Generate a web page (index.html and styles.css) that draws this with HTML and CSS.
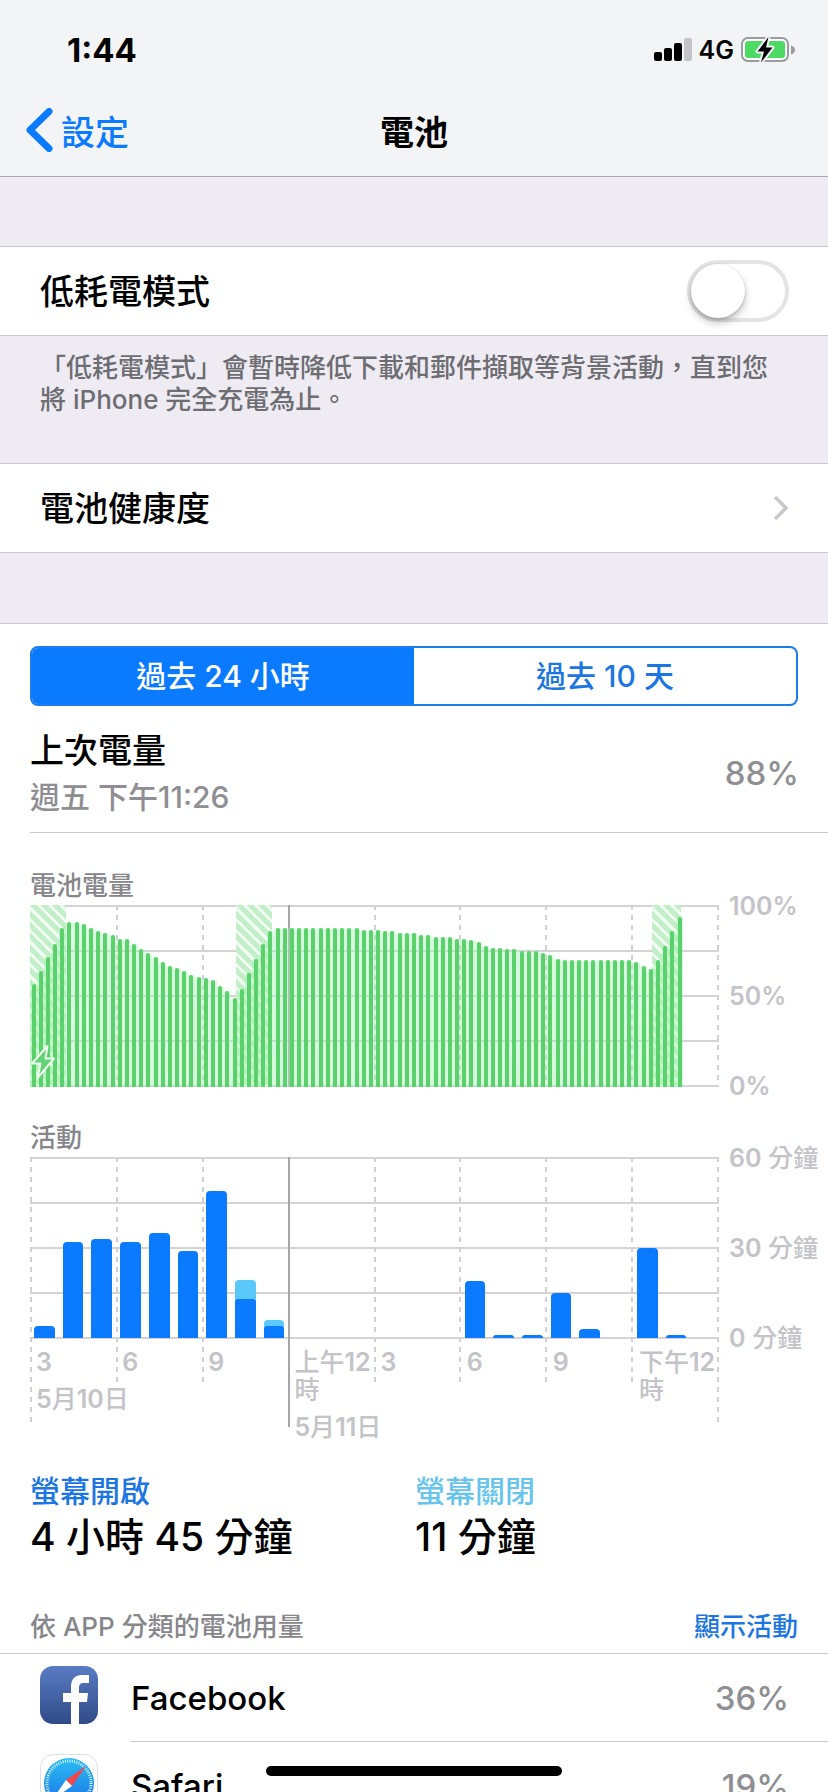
FILE: index.html
```html
<!DOCTYPE html>
<html lang="zh-Hant">
<head>
<meta charset="utf-8">
<meta name="viewport" content="width=device-width, initial-scale=1">
<title>電池</title>
<link rel="stylesheet" href="styles.css">
</head>
<body>
<div class="screen">
  <header class="topbar">
    <div class="status">
      <span class="status-time">1:44</span>
      <div class="status-icons">
        <svg class="signal" viewBox="0 0 38 24" aria-hidden="true">
          <rect x="0" y="14" width="8" height="9" rx="2"/>
          <rect x="10" y="10" width="8" height="13" rx="2"/>
          <rect x="20" y="5" width="8" height="18" rx="2"/>
          <rect x="30" y="0" width="8" height="23" rx="2" fill="#c4c5c8"/>
        </svg>
        <span class="network">4G</span>
        <svg class="battery" viewBox="0 0 54 28" aria-hidden="true">
          <rect x="1" y="2" width="46" height="23" rx="6" fill="#fdfefd" stroke="#9b9ca0" stroke-width="2"/>
          <rect x="4" y="5" width="40" height="17" rx="3" fill="#4cd964"/>
          <path d="M50 9.500q4 1.500 4 4.500t-4 4.500z" fill="#9b9ca0"/>
          <path d="M27.500 1 16.500 15.500h6.500L20 26.500 31.500 11.500h-6.500z" fill="#000" stroke="#f3f4f6" stroke-width="4" stroke-linejoin="round" paint-order="stroke"/>
        </svg>
      </div>
    </div>
    <nav class="nav">
      <a class="back" href="#settings">
        <svg class="back-arrow" viewBox="0 0 28 44" aria-hidden="true"><path d="M24 3.500 5 22l19 18.500" fill="none" stroke="#0a7aff" stroke-width="7" stroke-linecap="round" stroke-linejoin="round"/></svg>
        <span>設定</span>
      </a>
      <h1 class="title">電池</h1>
    </nav>
  </header>

  <main class="content">
    <section class="group">
      <label class="row" for="low-power">
        <span class="row-name">低耗電模式</span>
        <input class="switch" type="checkbox" role="switch" id="low-power">
      </label>
    </section>
    <p class="note">「低耗電模式」會暫時降低下載和郵件擷取等背景活動，直到您將 iPhone 完全充電為止。</p>
    <section class="group">
      <a class="row" href="#health">
        <span class="row-name">電池健康度</span>
        <svg class="disclosure" viewBox="0 0 16 26" aria-hidden="true"><path d="M2 2l11 11L2 24" fill="none" stroke="#c7c7cc" stroke-width="3.500"/></svg>
      </a>
    </section>

    <section class="usage">
      <div class="segmented" role="group" aria-label="時間範圍">
        <button class="segment segment-on" type="button" aria-pressed="true">過去 24 小時</button>
        <button class="segment" type="button" aria-pressed="false">過去 10 天</button>
      </div>

      <div class="last-charge">
        <div>
          <div class="charge-name">上次電量</div>
          <div class="charge-time">週五 下午11:26</div>
        </div>
        <span class="charge-value">88%</span>
      </div>

      <h2 class="chart-title chart-title-first">電池電量</h2>
      <div class="chart">
        <div class="gridlines"><i></i><i></i><i></i><i></i><i></i></div>
        <div class="verticals"><i></i><i></i><i></i><i class="midnight"></i><i></i><i></i><i></i><i></i><i></i></div>
        <div class="zones">
          <div class="zone zone-a"></div>
          <div class="zone zone-b"></div>
          <div class="zone zone-c"></div>
        </div>
        <div class="levels" id="levels"></div>
        <svg class="bolt" viewBox="0 0 26 36" aria-hidden="true"><path d="M17.500 2 2 19.500h8.500L7.500 34 24 14.500h-8.500z" fill="#62d274" stroke="#effcf0" stroke-width="2" stroke-linejoin="round"/></svg>
        <div class="scale"><b>100%</b><b>50%</b><b>0%</b></div>
      </div>

      <h2 class="chart-title">活動</h2>
      <div class="chart">
        <div class="gridlines"><i></i><i></i><i></i><i></i><i></i></div>
        <div class="verticals verticals-long"><i class="long"></i><i></i><i></i><i class="midnight long"></i><i></i><i></i><i></i><i></i><i class="long"></i></div>
        <div class="activity" id="activity"></div>
        <div class="scale"><span><b>60</b> 分鐘</span><span><b>30</b> 分鐘</span><span><b>0</b> 分鐘</span></div>
        <div class="hours">
          <div><b>3</b><div class="date"><b>5</b>月<b>10</b>日</div></div>
          <div><b>6</b></div>
          <div><b>9</b></div>
          <div>上午<b>12</b>時<div class="date"><b>5</b>月<b>11</b>日</div></div>
          <div><b>3</b></div>
          <div><b>6</b></div>
          <div><b>9</b></div>
          <div>下午<b>12</b>時</div>
        </div>
      </div>

      <div class="totals">
        <div>
          <div class="total-name on">螢幕開啟</div>
          <div class="total-value">4 小時 45 分鐘</div>
        </div>
        <div>
          <div class="total-name off">螢幕關閉</div>
          <div class="total-value">11 分鐘</div>
        </div>
      </div>

      <div class="list-head">
        <h2 class="list-title">依 APP 分類的電池用量</h2>
        <button class="list-action" type="button">顯示活動</button>
      </div>
      <div class="apps">
        <a class="app" href="#facebook">
          <svg class="app-icon" viewBox="0 0 58 58" aria-hidden="true">
            <defs><linearGradient id="fb" x1="0" y1="0" x2="0" y2="1"><stop offset="0" stop-color="#5a7cc4"/><stop offset="1" stop-color="#2f4a87"/></linearGradient></defs>
            <rect width="58" height="58" rx="13" fill="url(#fb)"/>
            <path d="M31 58V36h-8v-9h8v-6c0-8 4-12 11-12h7v8h-5c-4 0-5 2-5 5v5h9l-1 9h-8v22z" fill="#fff"/>
          </svg>
          <span class="app-body"><span>Facebook</span><span class="app-share">36%</span></span>
        </a>
        <a class="app" href="#safari">
          <svg class="app-icon" viewBox="0 0 58 58" aria-hidden="true">
            <defs><linearGradient id="sf" x1="0" y1="0" x2="0" y2="1"><stop offset="0" stop-color="#29bdf3"/><stop offset="1" stop-color="#1c6fe4"/></linearGradient></defs>
            <rect x=".5" y=".5" width="57" height="57" rx="13" fill="#fff" stroke="#dedee2"/>
            <circle cx="29" cy="29" r="25" fill="url(#sf)"/>
            <circle cx="29" cy="29" r="22" fill="none" stroke="#d6f2ff" stroke-width="3" stroke-dasharray="1 1.300"/>
            <path d="M46 12 26 26l6 6z" fill="#f2464b"/>
            <path d="M12 46 26 26l6 6z" fill="#fff"/>
          </svg>
          <span class="app-body"><span>Safari</span><span class="app-share">19%</span></span>
        </a>
      </div>
    </section>
  </main>
  <div class="home-indicator"></div>
</div>
<script src="charts.js"></script>
</body>
</html>
```
FILE: styles.css
```css
* { box-sizing: border-box; }

body {
  margin: 0;
  background: #eeecf2;
  color: #000;
  font-family: Inter, "Noto Sans CJK TC", sans-serif;
  font-size: 34px;
  font-weight: 500;
}

h1, h2, p { margin: 0; font-weight: inherit; }
a { color: inherit; text-decoration: none; }
b { font-weight: 600; }
button { padding: 0; border: 0; background: none; font: inherit; }

.screen {
  height: 100vh;
  overflow: hidden;
}

/* Status and navigation bars */
.topbar {
  background: #f3f4f6;
  border-bottom: 1px solid #a9a8af;
}

.status {
  display: flex;
  align-items: center;
  justify-content: space-between;
  height: 88px;
  padding: 12px 33px 0 67px;
}

.status-time { font-size: 33px; font-weight: 700; }

.status-icons { display: flex; align-items: center; gap: 7px; }
.signal { width: 38px; height: 24px; }
.network { font-size: 25px; font-weight: 600; }
.battery { width: 54px; height: 28px; }

.nav {
  display: grid;
  grid-template-columns: 1fr auto 1fr;
  align-items: center;
  height: 88px;
  padding: 0 25px 4px;
}

.back {
  display: flex;
  align-items: center;
  gap: 8px;
  color: #0a7aff;
}
.back-arrow { width: 28px; height: 44px; }
.title { font-size: 34px; font-weight: 600; }

/* Grouped rows */
.content { padding-top: 69px; }

.group {
  background: #fff;
  border-top: 1px solid #c8c7cc;
  border-bottom: 1px solid #c8c7cc;
}

.row {
  display: flex;
  align-items: center;
  justify-content: space-between;
  height: 88px;
  padding: 0 39px 0 40px;
}
.row-name { padding-bottom: 4px; }

.switch {
  appearance: none;
  width: 102px;
  height: 62px;
  margin: 0;
  padding: 0;
  border: 4px solid #e4e4e6;
  border-radius: 31px;
  background: #fff;
}
.switch::before {
  content: "";
  display: block;
  width: 54px;
  height: 54px;
  border-radius: 50%;
  background: #fff;
  box-shadow: 0 5px 8px rgba(0, 0, 0, .22), 0 1px 3px rgba(0, 0, 0, .2);
}
.switch:checked { background: #4cd964; border-color: #4cd964; }
.switch:checked::before { margin-left: auto; }

.note {
  padding: 16px 40px 47px;
  color: #6d6d72;
  font-size: 26px;
  line-height: 32px;
}

.disclosure { width: 16px; height: 26px; }

/* Usage panel */
.usage {
  margin-top: 70px;
  padding-top: 22px;
  background: #fff;
  border-top: 1px solid #c8c7cc;
}

.segmented {
  display: grid;
  grid-template-columns: 1fr 1fr;
  height: 60px;
  margin: 0 30px;
  border: 2px solid #1c7bee;
  border-radius: 8px;
  overflow: hidden;
}
.segment { padding-bottom: 4px; color: #1c76e2; font-size: 30px; }
.segment-on { background: #0a7aff; color: #fff; }

.last-charge {
  display: flex;
  align-items: center;
  justify-content: space-between;
  margin-left: 30px;
  padding: 21px 29px 13px 0;
  border-bottom: 1px solid #c8c7cc;
}
.charge-name { line-height: 48px; }
.charge-time { color: #8e8e93; font-size: 30px; line-height: 44px; }
.charge-value { color: #8e8e93; font-size: 33px; }

.chart-title {
  margin: 33px 30px 1px;
  color: #86868b;
  font-size: 26px;
  line-height: 36px;
}
.chart-title-first { margin-top: 35px; }

/* Charts: every layer shares the plot cell, the scale sits beside it */
.chart {
  display: grid;
  grid-template-columns: 1fr 109px;
  grid-template-rows: 182px auto;
  padding-left: 30px;
}

.gridlines, .verticals, .zones, .levels, .activity, .bolt {
  grid-area: 1 / 1;
}

.gridlines {
  display: flex;
  flex-direction: column;
  justify-content: space-between;
}
.gridlines i { height: 2px; background: #d4d4d8; }

.verticals {
  display: flex;
  justify-content: space-between;
}
.verticals i {
  width: 2px;
  background: repeating-linear-gradient(#d0d0d5 0 5px, transparent 5px 10px);
}
.verticals .midnight { background: #a6a6aa; }
.verticals-long { grid-row: 1 / 3; }
.verticals-long i { height: 226px; }
.verticals-long .long { height: 270px; }

.zones {
  display: grid;
  grid-template-columns: repeat(288, 1fr);
}
.zone {
  grid-row: 1;
  background: repeating-linear-gradient(45deg, #c3efc8 0 5px, #f0fbf1 5px 8px);
}
.zone-a { grid-column: 1 / 16; }
.zone-b { grid-column: 87 / 102; }
.zone-c { grid-column: 261 / 273; }

.levels {
  display: grid;
  grid-template-columns: repeat(96, 1fr);
  align-items: end;
  padding-top: 1px;
}
.level {
  display: flex;
  justify-content: center;
  background: rgba(160, 245, 175, .42);
  border-radius: 2px 2px 0 0;
}
.level i {
  width: 4px;
  border-radius: 2px 2px 0 0;
  background: #5ad16c;
}

.bolt {
  align-self: end;
  width: 26px;
  height: 36px;
  margin-bottom: 7px;
}

.activity {
  display: grid;
  grid-template-columns: repeat(24, 1fr);
  padding: 1px 0;
}
.hour {
  grid-row: 1;
  display: flex;
  flex-direction: column;
  justify-content: flex-end;
  padding: 0 4px;
}
.bar-off, .bar-on { border-radius: 4px 4px 0 0; }
.bar-off { background: #5ac8fa; }
.bar-on { background: #0a7aff; }
.bar-off + .bar-on { border-radius: 2px 2px 0 0; }

.scale {
  grid-area: 1 / 2;
  display: flex;
  flex-direction: column;
  justify-content: space-between;
  margin: -14px 0;
  padding-left: 10px;
  color: #c3c3c8;
  font-size: 25px;
  line-height: 30px;
  white-space: nowrap;
}

.hours {
  grid-area: 2 / 1;
  display: grid;
  grid-template-columns: repeat(8, 1fr);
  padding-top: 9px;
  color: #c3c3c8;
  font-size: 25px;
  line-height: 28px;
}
.hours > div { padding-left: 6px; min-width: 0; word-break: break-all; }
.date { margin-top: 9px; white-space: nowrap; }

.totals {
  display: grid;
  grid-template-columns: 1fr 1fr;
  margin: 28px 0 48px 30px;
  padding-right: 28px;
}
.total-name { font-size: 30px; line-height: 44px; }
.total-name.on { color: #1c76e2; }
.total-name.off { color: #67c4ec; }
.total-value { font-size: 39px; line-height: 48px; }

/* App list */
.list-head {
  display: flex;
  justify-content: space-between;
  padding: 0 30px 8px;
  border-bottom: 1px solid #c8c7cc;
  font-size: 26px;
  line-height: 36px;
}
.list-title { color: #86868b; font-size: 26px; }
.list-action { color: #1c76e2; }

.app {
  display: flex;
  align-items: center;
  gap: 33px;
  padding-left: 40px;
}
.app-icon { width: 58px; height: 58px; margin-bottom: 6px; }
.app-body {
  display: flex;
  flex: 1;
  align-items: center;
  justify-content: space-between;
  height: 88px;
  padding-right: 39px;
  border-bottom: 1px solid #c8c7cc;
  font-size: 33px;
}
.app-share { color: #8e8e93; }

.home-indicator {
  position: fixed;
  bottom: 16px;
  left: 50%;
  width: 296px;
  height: 10px;
  margin-left: -148px;
  border-radius: 5px;
  background: #000;
}
```
FILE: charts.js
```javascript
// Battery level in percent, one reading every 15 minutes.
const levels = [
  57, 64, 72, 79, 88, 91, 91, 90, 88, 86, 85, 84, 82, 82, 79, 76, 74, 72, 69,
  67, 66, 64, 62, 61, 60, 59, 56, 53, 49, 54, 63, 71, 79, 86,
  88, 88, 88, 88, 88, 88, 88, 88, 88, 88, 88, 88,
  87, 87, 87, 86, 86, 85, 85, 85, 84, 84, 83, 83, 83, 82, 82, 81, 80, 78,
  77, 77, 76, 76, 75, 75, 75, 74, 73, 71,
  70, 70, 70, 70, 70, 70, 70, 70, 70, 70, 69, 67, 65, 70, 78, 86, 94
];

// Minutes of use per hour: [screen on, screen off].
const activity = [
  [4, 0], [32, 0], [33, 0], [32, 0], [35, 0], [29, 0], [49, 0], [13, 6.5],
  [4, 2], [0, 0], [0, 0], [0, 0], [0, 0], [0, 0], [0, 0], [19, 0], [1, 0],
  [1, 0], [15, 0], [3, 0], [0, 0], [30, 0], [1, 0], [0, 0]
];

const levelBox = document.getElementById("levels");
for (const value of levels) {
  const slot = document.createElement("div");
  slot.className = "level";
  slot.style.height = value + "%";
  slot.append(document.createElement("i"));
  levelBox.append(slot);
}

const activityBox = document.getElementById("activity");
for (const [on, off] of activity) {
  const hour = document.createElement("div");
  hour.className = "hour";
  for (const [minutes, name] of [[off, "bar-off"], [on, "bar-on"]]) {
    if (!minutes) continue;
    const bar = document.createElement("div");
    bar.className = name;
    bar.style.height = (minutes / 60) * 100 + "%";
    hour.append(bar);
  }
  activityBox.append(hour);
}
```
